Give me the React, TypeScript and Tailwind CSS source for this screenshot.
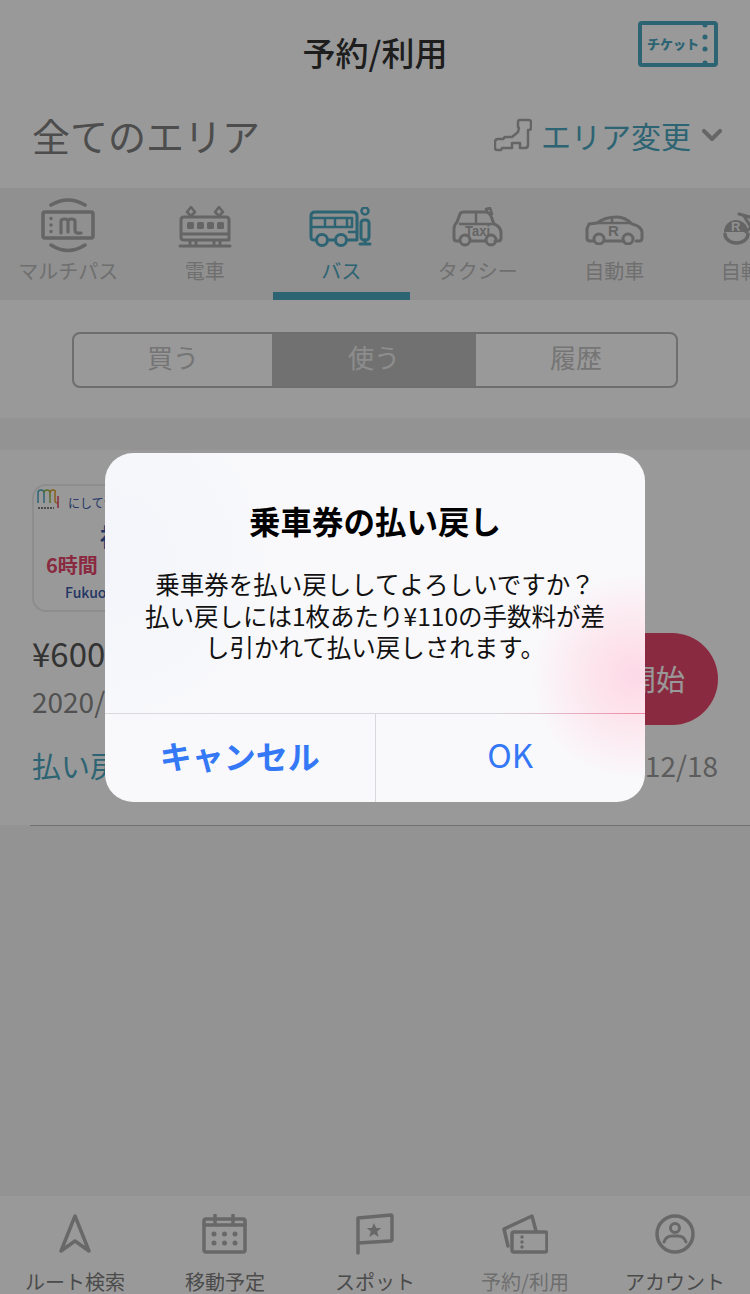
import type { ReactNode } from 'react';

const TEAL = '#4ba7c0';
const GRAY = '#a8a8a8';
const NAV_GRAY = '#aeaeae';

function Svg({ w, h, color = GRAY, children }: { w: number; h: number; color?: string; children: ReactNode }) {
  return (
    <svg width={w} height={h} viewBox={`0 0 ${w} ${h}`} fill="none" stroke={color} strokeWidth={3} strokeLinecap="round" strokeLinejoin="round">
      {children}
    </svg>
  );
}

function MultiIcon() {
  return (
    <Svg w={56} h={60}>
      <rect x="3" y="16" width="50" height="26" rx="2" strokeWidth={3.5} />
      <path d="M11 9Q28 -1 45 9M11 49Q28 60 45 49" strokeWidth={3.5} />
      <path d="M11 22.5v.1M11 29v.1M11 35.5v.1" strokeWidth={3.5} />
      <path d="M21 37V25q0-2 3.500-2t3.500 2v11M28 25q0-2 3.500-2t3.500 2v9q0 4 6 3" strokeWidth={3.2} />
    </Svg>
  );
}

function TrainIcon() {
  return (
    <Svg w={54} h={44}>
      <path d="M9 8l4-5 4 5-4 4zM37 8l4-5 4 5-4 4z" strokeWidth={2.5} />
      <path d="M3 32V16q0-3 3-3h42q3 0 3 3v20H6q-3 0-3-3zM3 30h48" />
      <g fill={GRAY} stroke="none">
        <rect x="9" y="18" width="7" height="7" rx="1.5" />
        <rect x="19" y="18" width="7" height="7" rx="1.5" />
        <rect x="29" y="18" width="7" height="7" rx="1.5" />
        <rect x="39" y="18" width="7" height="7" rx="1.5" />
      </g>
      <path d="M12 37v3M18 37v3M36 37v3M42 37v3M2 42h50" />
    </Svg>
  );
}

function BusIcon() {
  return (
    <Svg w={64} h={40} color={TEAL}>
      <path d="M7 33H5q-3 0-3-3V9q0-4 4-4h38q4 0 4 4v24h-9M19 33h7" />
      <path d="M3 11h40M3 20h40M16 11v9M26 11v9M38 11v9M43 11v9M40 25h8" strokeWidth={2.5} />
      <circle cx="13" cy="33" r="5.5" />
      <circle cx="32" cy="33" r="5.5" />
      <circle cx="56" cy="4" r="3.5" strokeWidth={2.5} />
      <rect x="52" y="13" width="8" height="20" rx="3" />
      <path d="M56 33v4M51 37h10" />
    </Svg>
  );
}

function TaxiIcon() {
  return (
    <Svg w={54} h={40}>
      <path d="M8 34H6q-3 0-3-3V22q0-4 3-7l3-8q1-2 4-2h22q3 0 5 4l3 8q6 2 7 8v6q0 3-3 3h-3M20 34h14" />
      <path d="M9 17h33M25 5v12M36 5l-1-3 4-1 2 6" strokeWidth={2.5} />
      <circle cx="14" cy="33" r="5" />
      <circle cx="40" cy="33" r="5" />
      <text x="14" y="29" fontSize="15" fontWeight="700" fill={GRAY} stroke="none" fontFamily="'Liberation Sans', sans-serif" textLength="25" lengthAdjust="spacingAndGlyphs">Taxi</text>
    </Svg>
  );
}

function CarIcon() {
  return (
    <Svg w={60} h={30}>
      <path d="M9 26H6q-3 0-3-3v-9l2-5 8-1q8-6 20-6 8 0 15 7 9 2 10 8v6q0 3-3 3h-3M20 26h20" />
      <path d="M13 8h33M28 3v5" strokeWidth={2.5} />
      <circle cx="15" cy="24" r="5" />
      <circle cx="44" cy="24" r="5" />
      <text x="24" y="21" fontSize="15" fontWeight="700" fill={GRAY} stroke="none" fontFamily="'Liberation Sans', sans-serif">R</text>
    </Svg>
  );
}

function BikeIcon() {
  return (
    <Svg w={56} h={34}>
      <path d="M16 2l14 4M21 4l10 16M31 12l-8 8" />
      <path d="M1 20a12 12 0 0 1 24 0z" fill={GRAY} stroke="none" />
      <path d="M2 22a11.500 9 0 0 0 23 0" strokeWidth={3.5} />
      <text x="8" y="19" fontSize="13" fontWeight="700" fill="#f0f0f0" stroke="none" fontFamily="'Liberation Sans', sans-serif">R</text>
    </Svg>
  );
}

function TicketIcon() {
  return (
    <svg width="80" height="46" viewBox="0 0 80 46" fill="none" stroke={TEAL} strokeWidth={4} strokeLinejoin="round">
      <rect x="2" y="2" width="76" height="42" rx="2" />
      <g fill={TEAL} stroke="none">
        <circle cx="67" cy="4" r="2.5" />
        <circle cx="67" cy="16" r="2.5" />
        <circle cx="67" cy="28" r="2.5" />
        <circle cx="67" cy="42" r="2.5" />
      </g>
      <text x="9" y="27.500" fontSize="13" fontWeight="900" fill={TEAL} stroke="none" fontFamily="'Noto Sans CJK JP', sans-serif">チケット</text>
    </svg>
  );
}

function JapanIcon() {
  return (
    <Svg w={38} h={34}>
      <path d="M26 2h9q2 0 2 2v6q0 2-2 2h-1v15q0 3-3 3h-5v-5h-8v5H8l-1 2H3q-2 0-2-2v-6q0-3 3-3h5l2-2h7l6-5 1-4-1-1V4q0-2 2-2z" strokeWidth={2.5} />
    </Svg>
  );
}

function ChevronDown() {
  return (
    <svg width="20" height="13" viewBox="0 0 20 13" fill="none" stroke="#aaaaaa" strokeWidth={4} strokeLinecap="round" strokeLinejoin="round">
      <path d="M2 2l8 8 8-8" />
    </svg>
  );
}

function RouteIcon() {
  return (
    <svg width="32" height="40" viewBox="0 0 32 40" fill="none" stroke={NAV_GRAY} strokeWidth={3.5} strokeLinejoin="round">
      <path d="M16 2L2 37l14-10 14 10z" />
    </svg>
  );
}

function CalendarIcon() {
  return (
    <svg width="46" height="40" viewBox="0 0 46 40" fill="none" stroke={NAV_GRAY} strokeWidth={3.5} strokeLinejoin="round" strokeLinecap="round">
      <rect x="2" y="5" width="41" height="33" rx="2" />
      <path d="M2 11h41M13 1v8M31 1v8" />
      <g fill={NAV_GRAY} stroke="none">
        <circle cx="12" cy="20" r="2.5" />
        <circle cx="22.500" cy="20" r="2.5" />
        <circle cx="33" cy="20" r="2.5" />
        <circle cx="12" cy="29" r="2.5" />
        <circle cx="22.500" cy="29" r="2.5" />
        <circle cx="33" cy="29" r="2.5" />
      </g>
    </svg>
  );
}

function SpotIcon() {
  return (
    <svg width="40" height="42" viewBox="0 0 40 42" fill="none" stroke={NAV_GRAY} strokeWidth={3.5} strokeLinejoin="round" strokeLinecap="round">
      <path d="M3 40V5l33-3q1 0 1 2v22q0 2-2 2L3 30" />
      <path d="M19 10l2.200 5h5l-4 3.500 1.500 5.500-4.700-3-4.700 3 1.500-5.500-4-3.500h5z" fill={NAV_GRAY} stroke="none" />
    </svg>
  );
}

function ReserveIcon() {
  return (
    <svg width="46" height="40" viewBox="0 0 46 40" fill="none" stroke={NAV_GRAY} strokeWidth={3.5} strokeLinejoin="round" strokeLinecap="round">
      <path d="M6 32L2 15 30 2l4 15" />
      <rect x="10" y="18" width="35" height="20" rx="2" />
      <path d="M20 23v.1M20 28v.1M20 33v.1" />
    </svg>
  );
}

function AccountIcon() {
  return (
    <svg width="40" height="40" viewBox="0 0 40 40" fill="none" stroke={NAV_GRAY} strokeWidth={3.5} strokeLinecap="round">
      <circle cx="20" cy="20" r="18" />
      <circle cx="20" cy="14" r="4.5" strokeWidth={3} />
      <path d="M9 28q2-6 8-6h6q6 0 8 6" strokeWidth={3} />
    </svg>
  );
}

const tabs: { label: string; icon: ReactNode; active?: boolean; iconClass: string }[] = [
  { label: 'マルチパス', icon: <MultiIcon />, iconClass: 'pt-[8px]' },
  { label: '電車', icon: <TrainIcon />, iconClass: 'pt-[16px]' },
  { label: 'バス', icon: <BusIcon />, active: true, iconClass: 'pt-[19px]' },
  { label: 'タクシー', icon: <TaxiIcon />, iconClass: 'pt-[19px]' },
  { label: '自動車', icon: <CarIcon />, iconClass: 'pt-[27px]' },
  { label: '自転車', icon: <BikeIcon />, iconClass: 'pt-[24px]' },
];

const navItems: { label: string; icon: ReactNode; active?: boolean; iconClass: string }[] = [
  { label: 'ルート検索', icon: <RouteIcon />, iconClass: 'pt-[18px]' },
  { label: '移動予定', icon: <CalendarIcon />, iconClass: 'pt-[18px]' },
  { label: 'スポット', icon: <SpotIcon />, iconClass: 'pt-[17px]' },
  { label: '予約/利用', icon: <ReserveIcon />, active: true, iconClass: 'pt-[18px]' },
  { label: 'アカウント', icon: <AccountIcon />, iconClass: 'pt-[18px]' },
];

export default function App() {
  return (
    <div className="relative flex h-[1294px] w-[750px] flex-col overflow-hidden bg-white font-['Noto_Sans_CJK_JP',sans-serif]">
      <header className="relative flex h-[106px] shrink-0 justify-center pt-[30px]">
        <h1 className="text-[33px] leading-[44px] font-medium text-[#333333]">予約/利用</h1>
        <div className="absolute top-[21px] right-[32px] flex">
          <TicketIcon />
        </div>
      </header>

      <div className="flex h-[82px] shrink-0 items-start justify-between pr-[28px] pl-[32px]">
        <span className="text-[38px] leading-[58px] text-[#808080]">全てのエリア</span>
        <div className="flex h-[58px] items-center">
          <JapanIcon />
          <span className="ml-[9px] text-[30px] leading-[44px] text-[#4ba7c0]">エリア変更</span>
          <span className="ml-[11px] flex">
            <ChevronDown />
          </span>
        </div>
      </div>

      <nav className="flex h-[112px] shrink-0 overflow-hidden bg-[#f0f0f0]">
        {tabs.map(tab => (
          <div key={tab.label} className="relative flex w-[136.5px] shrink-0 flex-col items-center">
            <div className={`flex h-[66px] items-start ${tab.iconClass}`}>{tab.icon}</div>
            <span className={`text-[20px] leading-[34px] whitespace-nowrap ${tab.active ? 'text-[#4ba7c0]' : 'text-[#bababa]'}`}>{tab.label}</span>
            {tab.active && <div className="absolute right-0 bottom-0 left-0 h-[8px] bg-[#4ba7c0]" />}
          </div>
        ))}
      </nav>

      <div className="flex h-[118px] shrink-0 items-start px-[72px] pt-[32px]">
        <div className="flex h-[56px] w-full overflow-hidden rounded-[8px] border-2 border-[#b8b8b8]">
          <div className="flex w-[198px] items-center justify-center pb-[8px] text-[26px] text-[#c4c4c4]">買う</div>
          <div className="flex w-[204px] items-center justify-center bg-[#bdbdbd] pb-[8px] text-[26px] text-[#ebebeb]">使う</div>
          <div className="flex flex-1 items-center justify-center pb-[8px] text-[26px] text-[#c4c4c4]">履歴</div>
        </div>
      </div>

      <div className="h-[32px] shrink-0 bg-[#f5f5f5]" />

      <section className="h-[375px] shrink-0 pt-[34px]">
        <div className="ml-[32px] h-[128px] w-[220px] overflow-hidden rounded-[14px] border-2 border-[#ececec] bg-white">
          <div className="flex h-[35px] items-start pt-[2px] pl-[2px]">
            <svg width="24" height="22" viewBox="0 0 24 22" fill="none" strokeWidth={1.5}>
              <path d="M2 15V5q0-3 3-3t3 3v10" stroke="#4ba7c0" />
              <path d="M8 5q0-3 3-3t3 3v10" stroke="#8fb84a" />
              <path d="M14 5q0-3 3-3t2 3v8q0 2 3 2" stroke="#e0a030" />
              <path d="M22 8v12" stroke="#e6466b" />
              <path d="M2 20h16" stroke="#555555" strokeDasharray="2 1" />
            </svg>
            <span className="ml-[8px] pt-[6px] text-[12px] leading-[18px] text-[#3a5ba8]">にしてつ</span>
          </div>
          <div className="pl-[66px] text-[24px] leading-[29px] font-bold text-[#3a5ba8]">福</div>
          <div className="pl-[12px] text-[20px] leading-[30px] font-bold text-[#e6466b]">6時間</div>
          <div className="pl-[31px] text-[14px] leading-[24px] font-medium text-[#3a5ba8]">Fukuoka</div>
        </div>

        <div className="mt-[21px] flex h-[92px] items-start justify-between">
          <div className="pl-[32px]">
            <div className="pt-[2px] text-[33px] leading-[36px] text-[#555555]">¥600</div>
            <div className="pt-[10px] text-[28px] leading-[40px] text-[#888888]">2020/</div>
          </div>
          <div className="mr-[32px] flex h-[92px] w-[240px] items-center justify-end rounded-full bg-[#e6466b] pr-[33px] text-[29px] text-white">開始</div>
        </div>

        <div className="mt-[18px] flex items-center justify-between px-[32px]">
          <span className="text-[29px] leading-[44px] text-[#4ba7c0]">払い戻し</span>
          <span className="text-[28px] leading-[44px] text-[#999999]">12/18</span>
        </div>
      </section>

      <div className="relative flex-1 bg-[#f5f5f5]">
        <div className="absolute top-0 right-0 left-[30px] h-[1px] bg-[#bdbdbd]" />
      </div>

      <footer className="flex h-[98px] shrink-0 overflow-hidden bg-white shadow-[0_-2px_4px_rgba(0,0,0,0.12)]">
        {navItems.map(item => (
          <div key={item.label} className="flex flex-1 flex-col items-center">
            <div className={`flex h-[74px] shrink-0 items-start ${item.iconClass}`}>{item.icon}</div>
            <span className={`text-[20px] leading-[24px] whitespace-nowrap ${item.active ? 'text-[#b8b8b8]' : 'text-[#7d7d7d]'}`}>{item.label}</span>
          </div>
        ))}
      </footer>

      <div className="absolute inset-0 bg-black/40 pt-[453px]">
        <div className="mx-auto flex h-[349px] w-[540px] flex-col overflow-hidden rounded-[28px] bg-[#f9f9fb] bg-[radial-gradient(circle_105px_at_98%_64%,#fcd9e6_0%,#fde3ec_35%,rgba(249,249,251,0)_100%),radial-gradient(circle_190px_at_0%_30%,#f3f5fb_0%,rgba(249,249,251,0)_100%)]">
          <div className="flex h-[260px] flex-col items-center px-[30px] pt-[45px]">
            <h2 className="text-[31.500px] leading-[44px] font-bold text-black">乗車券の払い戻し</h2>
            <p className="mt-[26px] w-[470px] text-center text-[24.500px] leading-[31.500px] text-[#111111]">
              乗車券を払い戻ししてよろしいですか？
              <br />
              払い戻しには1枚あたり¥110の手数料が差
              <br />
              し引かれて払い戻しされます。
            </p>
          </div>
          <div className="h-[1px] shrink-0 bg-[linear-gradient(90deg,#d9d9dd_0%,#d9d9dd_72%,#f08aa5_100%)]" />
          <div className="flex flex-1">
            <div className="flex flex-1 items-center justify-center pb-[6px] text-[32px] font-bold text-[#3478f6]">キャンセル</div>
            <div className="w-[1px] bg-[#d9d9dd]" />
            <div className="flex flex-1 items-center justify-center pb-[6px] text-[33px] text-[#3478f6]">OK</div>
          </div>
        </div>
      </div>
    </div>
  );
}
